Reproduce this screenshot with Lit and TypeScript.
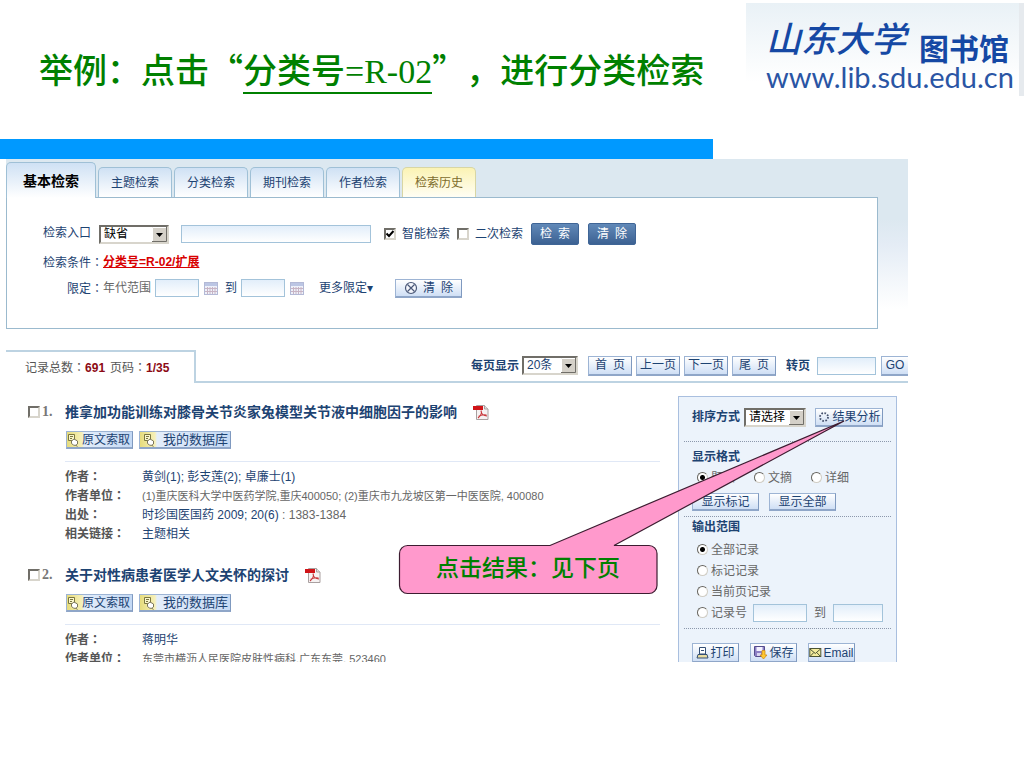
import { LitElement, html, css, svg } from "lit";
import { customElement } from "lit/decorators.js";

interface Article {
  no: number;
  title: string;
  fields: { label: string; value: string; tail?: string; plain?: boolean }[];
}

const tabs = ["主题检索", "分类检索", "期刊检索", "作者检索"];

const articles: Article[] = [
  {
    no: 1,
    title: "推拿加功能训练对膝骨关节炎家兔模型关节液中细胞因子的影响",
    fields: [
      { label: "作者", value: "黄剑(1); 彭支莲(2); 卓廉士(1)" },
      { label: "作者单位", value: "(1)重庆医科大学中医药学院,重庆400050; (2)重庆市九龙坡区第一中医医院, 400080", plain: true },
      { label: "出处", value: "时珍国医国药 2009; 20(6)", tail: " : 1383-1384" },
      { label: "相关链接", value: "主题相关" },
    ],
  },
  {
    no: 2,
    title: "关于对性病患者医学人文关怀的探讨",
    fields: [
      { label: "作者", value: "蒋明华" },
      { label: "作者单位", value: "东莞市横沥人民医院皮肤性病科,广东东莞, 523460", plain: true },
    ],
  },
];

const colon = html`<span class="colon" lang="zh-TW">：</span>`;

const calendarIcon = svg`<svg class="cal" width="14" height="13" viewBox="0 0 14 13" aria-hidden="true">
  <rect x=".5" y=".5" width="13" height="12" fill="#eef1fa" stroke="#b3b9d6"/>
  <rect x="1" y="1" width="12" height="3" fill="#bcc6e4"/>
  <path d="M3.500 5v7M6 5v7M8.500 5v7M11 5v7M1 6.500h12M1 9.500h12" stroke="#c8b4c4" fill="none"/>
</svg>`;

const noteIcon = svg`<svg class="note" width="13" height="16" viewBox="0 0 13 16" aria-hidden="true">
  <path d="M2.500 2.500h6v6h-6zM4 4.500h3M4 6.500h2" fill="#faf6cc" stroke="#7a763f"/>
  <path d="M5.500 9l2.500-2 3.500 2v3l-2 1.500-2-.5-2-1.500z" fill="#fff" stroke="#7a765c"/>
  <path d="M9.500 13l2 1.500" stroke="#7a765c"/>
</svg>`;

const pdfIcon = svg`<svg width="16" height="16" viewBox="0 0 16 16" role="img" aria-label="PDF">
  <path d="M3.500 1.500h8l3.500 3.500v10.500H3.500z" fill="#f6f2f2" stroke="#a9a0a0"/>
  <path d="M11.500 1.500V5H15" fill="#ddd" stroke="#a9a0a0"/>
  <rect x="0" y="2" width="10" height="4" fill="#d01418"/>
  <path d="M8 6.500c1 2 0 5-3 7.500M8 7c.5 3 2.500 5 6 5M5.500 12.500c2-1.500 5-2 8-1.500" fill="none" stroke="#c8383c" stroke-width="1.100"/>
</svg>`;

const cancelIcon = svg`<svg width="14" height="14" viewBox="0 0 14 14" aria-hidden="true">
  <circle cx="7" cy="7" r="5.500" fill="#f4f6fc" stroke="#4a5878" stroke-width="1.200"/>
  <path d="M3.500 3.500l7 7M10.500 3.500l-7 7" stroke="#4a5878" stroke-width="1.200"/>
</svg>`;

const spinnerIcon = svg`<svg width="12" height="12" viewBox="0 0 12 12" aria-hidden="true">
  <circle cx="6" cy="6" r="4" fill="none" stroke="#44506c" stroke-width="1.800" stroke-dasharray="1.600 1.540"/>
</svg>`;

const printIcon = svg`<svg width="13" height="13" viewBox="0 0 13 13" aria-hidden="true">
  <path d="M3.500 1.500h6V8h-6z" fill="#fff" stroke="#344f74"/>
  <path d="M5 4.500h3" stroke="#344f74"/>
  <path d="M2 8.500h9l1 3.500H1z" fill="#e8dca0" stroke="#344f74"/>
</svg>`;

const saveIcon = svg`<svg width="15" height="15" viewBox="0 0 15 15" aria-hidden="true">
  <path d="M1.500 1.500h10v10h-9l-1-1z" fill="#8c80c4" stroke="#544c8c"/>
  <rect x="3.500" y="2" width="6" height="4" fill="#f4f2ff"/>
  <rect x="4" y="8" width="4" height="3" fill="#d8d4f0"/>
  <path d="M9 5.500h3V10h2l-3.500 4L7 10h2z" fill="#ffc830" stroke="#d08c18" stroke-width=".8"/>
</svg>`;

const mailIcon = svg`<svg width="13" height="11" viewBox="0 0 13 11" aria-hidden="true">
  <rect x=".8" y="1.500" width="11" height="8" fill="#f4ec9c" stroke="#4c5434"/>
  <path d="M1 2l5.300 4.500L11.500 2M1 9.500l3.800-4M11.500 9.500l-3.800-4" fill="none" stroke="#4c5434"/>
</svg>`;

@customElement("app-root")
export class AppRoot extends LitElement {
  static styles = css`
    :host {
      display: block;
      position: relative;
      min-height: 100vh;
      background: #fff;
      color: #1d4372;
      font: 12px/18px "Liberation Sans", "Noto Sans CJK SC", sans-serif;
    }
    * { box-sizing: border-box; }
    a { color: inherit; text-decoration: none; }
    svg { flex: none; display: block; }
    button, input, select { font: inherit; color: inherit; margin: 0; padding: 0; border-radius: 0; }
    button { white-space: nowrap; }
    .colon { font-family: "Noto Sans CJK TC", sans-serif; }
    .header { display: flex; justify-content: space-between; height: 139px; }
    h1 {
      margin: 0;
      padding: 44px 0 0 39px;
      color: #008000;
      font: 500 34px/50px "Noto Sans CJK SC", sans-serif;
      font-kerning: none;
      text-spacing-trim: space-all;
      white-space: nowrap;
    }
    .call-no { border-bottom: 2px solid #008000; display: inline-block; line-height: 40px; }
    .latin { font-family: "Liberation Serif", serif; }
    .logo {
      width: 278px;
      height: 93px;
      margin-top: 3px;
      padding: 8px 10px 0 20px;
      border-right: 5px solid #e6eaee;
      background: linear-gradient(#e9f1f6, #fff 85%);
      color: #1548a4;
      white-space: nowrap;
    }
    .logo-names { display: flex; align-items: flex-end; justify-content: space-between; height: 56px; }
    .school { font: oblique 500 35px/60px "Noto Sans CJK SC", sans-serif; }
    .library { font: 700 30px/40px "Noto Sans CJK SC", sans-serif; }
    .site { font: 400 29px/20px Lato, sans-serif; color: #2a55a4; }
    .ribbon { width: 69.6%; height: 20px; margin-right: auto; background: #0099ff; }
    .screen { height: 503px; margin: 0 116px 0 6px; overflow: hidden; }

    .search { height: 191px; background: linear-gradient(#dce8f0 60px, #e4ecf5 85px, #fff 150px); }
    .tabs { display: flex; align-items: flex-end; gap: 2px; height: 38px; }
    .tab {
      width: 74px;
      height: 30px;
      border: 1px solid #9fc0d6;
      border-bottom: 0;
      border-radius: 5px 5px 0 0;
      background: linear-gradient(#cfe1f4, #fff);
      font-size: 12px;
    }
    .tab.current {
      width: 90px;
      height: 36px;
      margin-bottom: -1px;
      color: #000;
      font-size: 14px;
      font-weight: 700;
      position: relative;
    }
    .tab.history { background: linear-gradient(#fbf3b4, #fffef4); border-color: #d8d6a4; color: #7d6c2c; }
    .panel {
      height: 132px;
      margin-right: 30px;
      padding: 22px 0 28px 36px;
      border: 1px solid #9bbace;
      background: #fff;
    }
    .row { display: flex; align-items: center; height: 28px; white-space: nowrap; }
    .row.last { height: 24px; padding-left: 24px; }
    .entry { margin: 0 8px 2px 0; }
    .term { color: #d80000; font-weight: 700; text-decoration: underline; }
    .gray { color: #666; }
    .more { margin: 0 22px 0 8px; }
    .cal { margin: 0 7px 0 5px; }

    .box { height: 18px; border: 1px solid #a3c3da; background: linear-gradient(#e2eefa, #fff); }
    .w-query { width: 190px; margin: 0 13px 0 12px; }
    .w-year { width: 44px; margin-left: 4px; }
    .w-page { width: 59px; margin: 0 5px 0 7px; }
    .w-from { width: 54px; margin: 0 7px 0 6px; }
    .w-to { width: 50px; margin-left: 7px; }

    select {
      appearance: none;
      height: 19px;
      padding-left: 3px;
      border: 2px solid;
      border-color: #706e68 #d8d5cc #d8d5cc #706e68;
      color: #000;
      line-height: 15px;
      background: #fff url("data:image/svg+xml,%3Csvg xmlns='http://www.w3.org/2000/svg' width='15' height='15'%3E%3Cpath fill='%23d4d0c8' d='M0 0h15v15H0z'/%3E%3Cpath d='M.5 15V.5H15' fill='none' stroke='%23fff'/%3E%3Cpath d='M14.500 0v14.500H0' fill='none' stroke='%23706e68'/%3E%3Cpath d='M4 6h7l-3.500 4z'/%3E%3C/svg%3E") no-repeat right center;
    }
    .w-field { width: 70px; }
    .w-size { width: 56px; margin: 0 10px 0 3px; color: #1d4372; }
    .w-sort { width: 62px; margin: 0 9px 0 4px; }

    input[type="checkbox"] {
      appearance: none;
      flex: none;
      width: 12px;
      height: 12px;
      border: 2px solid;
      border-color: #706e68 #d8d5cc #d8d5cc #706e68;
      background: #fff;
    }
    input[type="checkbox"]:checked {
      background: #fff url("data:image/svg+xml,%3Csvg xmlns='http://www.w3.org/2000/svg' width='8' height='8'%3E%3Cpath d='M.5 3.500l2.500 2.500 4.500-5' fill='none' stroke='%23000' stroke-width='2'/%3E%3C/svg%3E") center no-repeat;
    }
    input[type="radio"] {
      appearance: none;
      flex: none;
      width: 11px;
      height: 11px;
      border: 1px solid;
      border-color: #66645e #d0cdc4 #d0cdc4 #66645e;
      border-radius: 50%;
      background: #fff;
    }
    input[type="radio"]:checked { background: radial-gradient(#000 2px, #fff 3px); }
    .check { display: flex; align-items: center; gap: 6px; margin-right: 7px; }

    .solid {
      width: 48px;
      height: 22px;
      margin: 0 9px 0 1px;
      border: 1px solid #3f6596;
      border-radius: 2px;
      background: linear-gradient(#6189b8, #3c6192);
      color: #fff;
    }
    .solid + .solid { margin: 0; }
    .btn {
      display: flex;
      align-items: center;
      justify-content: center;
      gap: 3px;
      height: 19px;
      border: 1px solid #9db4d4;
      border-right-color: #7f99bf;
      border-bottom: 2px solid #8fa6c8;
      background: linear-gradient(#fff, #cfdff5);
      line-height: 16px;
    }
    .w-clear { width: 67px; gap: 5px; }

    .bar { display: flex; height: 33px; }
    .count { width: 190px; padding: 6px 0 0 19px; border: 2px solid #bdd3e2; border-width: 2px 2px 0 0; color: #555; white-space: nowrap; }
    .num { color: #8c0a14; font-weight: 700; }
    .total { margin-right: 5px; }
    .pager { flex: 1; display: flex; align-items: center; justify-content: flex-end; border-bottom: 2px solid #bdd3e2; white-space: nowrap; }
    .pages { display: flex; gap: 4px; margin-right: 10px; }
    .pages .btn { width: 44px; height: 20px; }
    .go { width: 27px; height: 20px; border-right: 0; }

    .content { display: flex; gap: 18px; padding-right: 11px; }
    .results { flex: 1; min-width: 0; padding: 19px 0 0 22px; }
    .article { margin-bottom: 23px; }
    .head { display: flex; align-items: center; height: 20px; }
    .no { width: 25px; padding-left: 2px; color: #777; font: 700 14px/18px "Liberation Serif", serif; }
    h2 { margin: 0 16px 0 0; font-size: 14px; line-height: 20px; white-space: nowrap; }
    .tools { display: flex; gap: 6px; margin: 9px 0 12px 38px; }
    .tools .btn { width: 67px; height: 18px; padding-right: 3px; background: linear-gradient(90deg, #e6dc7c, #f6f0b8 15px, #e4eefb 17px, #c4d9f4); }
    .tools .btn.wide { width: 92px; padding: 0 2px; font-size: 13px; justify-content: space-between; }
    .fields { margin: 0 0 0 37px; padding-top: 4px; border-top: 1px solid #e0e8f6; }
    .field { display: flex; height: 19px; line-height: 19px; white-space: nowrap; }
    dt { width: 77px; color: #555; font-weight: 700; }
    dd { margin: 0; padding-top: 2px; }
    .unit { color: #666; font-size: 11px; }

    .side {
      width: 219px;
      height: 290px;
      margin-top: 13px;
      padding: 9px 5px;
      border: 1px solid #a9bfdf;
      background: #ecf3fb;
      white-space: nowrap;
    }
    .group { padding: 0 8px; border-bottom: 1px dotted #8c98ac; }
    .line { display: flex; align-items: center; height: 24px; }
    .sort { height: 36px; padding-bottom: 13px; }
    .w-analyse { width: 68px; }
    h3 { margin: 0; font-size: 12px; line-height: 20px; }
    .formats { height: 75px; padding-top: 5px; }
    .radios { display: flex; gap: 19px; height: 21px; padding-left: 5px; }
    .radio { display: flex; align-items: center; gap: 3px; height: 21px; color: #666; }
    .shows { display: flex; gap: 10px; margin-top: 5px; }
    .shows .btn { width: 67px; height: 18px; }
    .range { height: 112px; }
    .range h3 { margin-bottom: 2px; }
    .range .radio { margin-left: 5px; }
    .range .line .radio { margin-right: 2px; }
    .range .line { height: 21px; color: #666; }
    .range .line .w-from { margin-left: 4px; }
    .outs { display: flex; gap: 11px; padding: 14px 8px; }
    .outs .btn { width: 47px; height: 20px; gap: 1px; }

    .callout { position: absolute; left: 399px; top: 420px; width: 260px; height: 176px; }
    .callout svg { overflow: visible; }
    .callout p {
      position: absolute;
      left: 0;
      top: 125px;
      width: 258px;
      height: 49px;
      margin: 0;
      color: #008000;
      font: 500 23px/43px "Noto Sans CJK SC", sans-serif;
      text-align: center;
    }
  `;

  private renderArticle(a: Article) {
    return html`<article class="article">
      <div class="head">
        <input type="checkbox" id="pick-${a.no}" aria-label=${a.title} />
        <label class="no" for="pick-${a.no}">${a.no}.</label>
        <h2><a href="#">${a.title}</a></h2>
        <a href="#">${pdfIcon}</a>
      </div>
      <div class="tools">
        <button class="btn">${noteIcon}原文索取</button>
        <button class="btn wide">${noteIcon}我的数据库</button>
      </div>
      <dl class="fields">
        ${a.fields.map(
          (f) => html`<div class="field">
            <dt>${f.label}${colon}</dt>
            <dd>${f.plain ? html`<span class="unit">${f.value}</span>` : html`<a href="#">${f.value}</a>`}<span class="gray">${f.tail ?? ""}</span></dd>
          </div>`
        )}
      </dl>
    </article>`;
  }

  render() {
    return html`
      <header class="header">
        <h1 lang="zh-CN">举例：点击“<span class="call-no">分类号<span class="latin">=R-02</span></span>”，进行分类检索</h1>
        <div class="logo">
          <div class="logo-names"><span class="school">山东大学</span><span class="library">图书馆</span></div>
          <div class="site">www.lib.sdu.edu.cn</div>
        </div>
      </header>
      <div class="ribbon"></div>
      <main class="screen" lang="zh-CN">
        <section class="search">
          <nav class="tabs">
            <button class="tab current">基本检索</button>
            ${tabs.map((t) => html`<button class="tab">${t}</button>`)}
            <button class="tab history">检索历史</button>
          </nav>
          <form class="panel" @submit=${(e: Event) => e.preventDefault()}>
            <div class="row">
              <label class="entry" for="field">检索入口</label>
              <select class="w-field" id="field"><option>缺省</option></select>
              <input class="box w-query" type="text" aria-label="检索词" />
              <label class="check"><input type="checkbox" checked />智能检索</label>
              <label class="check"><input type="checkbox" />二次检索</label>
              <button class="solid">检&ensp;索</button>
              <button class="solid" type="button">清&ensp;除</button>
            </div>
            <div class="row"><span>检索条件${colon}</span><a class="term" href="#">分类号=R-02/扩展</a></div>
            <div class="row last">
              <span>限定${colon}</span><label class="gray" for="from">年代范围</label>
              <input class="box w-year" id="from" type="text" />${calendarIcon}
              <label for="to">到</label>
              <input class="box w-year" id="to" type="text" />${calendarIcon}
              <a class="more" href="#">更多限定▾</a>
              <button class="btn w-clear" type="button">${cancelIcon}<span>清&ensp;除</span></button>
            </div>
          </form>
        </section>

        <section class="bar">
          <div class="count">记录总数${colon}<span class="num total">691</span>页码${colon}<span class="num">1/35</span></div>
          <div class="pager">
            <label for="size"><b>每页显示</b></label>
            <select class="w-size" id="size"><option>20条</option></select>
            <div class="pages">
              <button class="btn">首&ensp;页</button>
              <button class="btn">上一页</button>
              <button class="btn">下一页</button>
              <button class="btn">尾&ensp;页</button>
            </div>
            <label for="page"><b>转页</b></label>
            <input class="box w-page" id="page" type="text" />
            <button class="btn go">GO</button>
          </div>
        </section>

        <div class="content">
          <section class="results">${articles.map((a) => this.renderArticle(a))}</section>
          <aside class="side">
            <div class="group sort line">
              <label for="sort"><b>排序方式</b></label>
              <select class="w-sort" id="sort"><option>请选择</option></select>
              <button class="btn w-analyse">${spinnerIcon}结果分析</button>
            </div>
            <div class="group formats">
              <h3>显示格式</h3>
              <div class="radios">
                ${["题录", "文摘", "详细"].map(
                  (t, i) => html`<label class="radio"><input type="radio" name="format" ?checked=${i === 0} />${t}</label>`
                )}
              </div>
              <div class="shows">
                <button class="btn">显示标记</button>
                <button class="btn">显示全部</button>
              </div>
            </div>
            <div class="group range">
              <h3>输出范围</h3>
              ${["全部记录", "标记记录", "当前页记录"].map(
                (t, i) => html`<label class="radio"><input type="radio" name="range" ?checked=${i === 0} />${t}</label>`
              )}
              <div class="line">
                <label class="radio"><input type="radio" name="range" />记录号</label>
                <input class="box w-from" id="rec-from" type="text" aria-label="起始记录号" />
                <label for="rec-to">到</label>
                <input class="box w-to" id="rec-to" type="text" />
              </div>
            </div>
            <div class="outs">
              <button class="btn">${printIcon}打印</button>
              <button class="btn">${saveIcon}保存</button>
              <button class="btn">${mailIcon}Email</button>
            </div>
          </aside>
        </div>
      </main>

      <div class="callout">
        <svg width="260" height="176" viewBox="0 0 260 176" aria-hidden="true">
          <path d="M8 125.500H151L445 1 215 125.500H250a8 8 0 0 1 8 8V165.500a8 8 0 0 1-8 8H8.500a8 8 0 0 1-8-8V133.500a8 8 0 0 1 8-8z"
            fill="#ff99cc" stroke="#3c1c30" stroke-width="1.200" />
        </svg>
        <p lang="zh-CN">点击结果：见下页</p>
      </div>
    `;
  }
}
